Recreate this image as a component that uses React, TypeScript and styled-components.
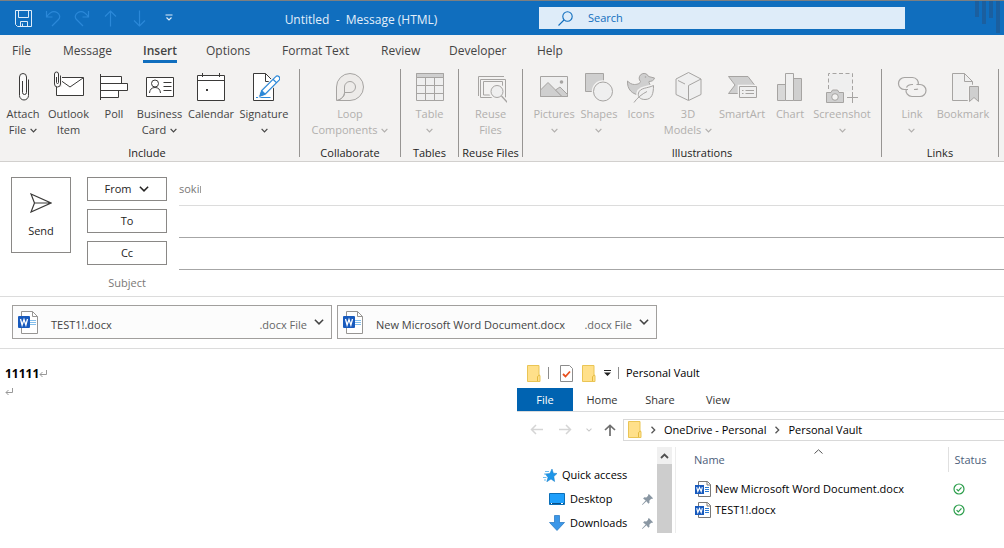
import React from 'react';
import styled, { createGlobalStyle } from 'styled-components';

const GlobalStyle = createGlobalStyle`
  *, *::before, *::after { box-sizing: border-box; }
  body { margin: 0; background: #fff; }
  body, button, input, table { font-family: "Open Sans", "Noto Sans", sans-serif; font-size: 11px; line-height: 16px; color: #444; }
  button { padding: 0; border: 0; background: none; }
  svg { display: block; flex: none; }
`;

/* ---------- title bar ---------- */

const TitleBar = styled.header`
  display: flex;
  height: 35px;
  background: #106ebe;
  border-top: 1px solid #7d7f80;
  color: #e3effa;
`;
const QuickAccess = styled.div`
  display: flex;
  align-items: center;
  padding-left: 9px;
  width: 183px;
`;
const QuickButton = styled.button<{ $dim?: boolean }>`
  display: flex;
  justify-content: center;
  width: 29px;
  color: ${p => (p.$dim ? '#2b88d8' : '#deecf9')};
`;
const WindowTitle = styled.h1`
  flex: 356 1 0;
  margin: 0;
  padding-top: 3px;
  align-self: center;
  text-align: center;
  font-size: 12px;
  line-height: 16px;
  font-weight: 400;
  white-space: pre;
`;
const SearchBox = styled.label`
  flex: 347 1 0;
  display: flex;
  align-items: center;
  gap: 15px;
  height: 22px;
  margin-top: 6px;
  padding-left: 19px;
  background: #deecf9;
  color: #106ebe;
`;
const SearchInput = styled.input`
  flex: 1;
  min-width: 0;
  padding: 0;
  border: 0;
  outline: 0;
  background: transparent;
  color: #106ebe;
  &::placeholder { color: #106ebe; opacity: 1; }
`;
const Ornament = styled.div`
  display: flex;
  justify-content: flex-end;
  width: 99px;
  padding-right: 3px;
`;

/* ---------- ribbon ---------- */

const Tabs = styled.nav`
  display: grid;
  grid-template-columns: 51px 80px 63px 76px 99px 68px 88px auto;
  justify-content: start;
  padding: 7px 0 0 12px;
  height: 31px;
  background: #f3f2f1;
`;
const Tab = styled.button<{ $active?: boolean }>`
  justify-self: start;
  height: 21px;
  font-size: 12px;
  line-height: 16px;
  font-weight: ${p => (p.$active ? 600 : 400)};
  border-bottom: 3px solid ${p => (p.$active ? '#106ebe' : 'transparent')};
  white-space: nowrap;
`;
const RibbonBar = styled.div`
  display: flex;
  height: 96px;
  padding-top: 3px;
  background: #f3f2f1;
  border-bottom: 1px solid #d2d0ce;
`;
const Group = styled.section<{ $width: number; $gap?: number }>`
  flex: none;
  width: ${p => p.$width}px;
  height: 88px;
  padding-right: ${p => p.$gap ?? 0}px;
  border-right: 1px solid #979593;
`;
const GroupItems = styled.div<{ $start?: boolean }>`
  display: flex;
  justify-content: ${p => (p.$start ? 'flex-start' : 'center')};
  height: 76px;
`;
const GroupName = styled.h2`
  margin: 0;
  font-size: 11px;
  line-height: 16px;
  font-weight: 400;
  color: #252423;
  text-align: center;
  white-space: nowrap;
`;
const Tool = styled.button<{ $width: number; $dim?: boolean }>`
  display: flex;
  flex-direction: column;
  align-items: center;
  width: ${p => p.$width}px;
  padding-top: 2px;
  gap: 3px;
  color: ${p => (p.$dim ? '#b1afad' : '#444')};
`;
const ToolLine = styled.span`
  display: flex;
  justify-content: center;
  align-items: center;
  gap: 4px;
  height: 16px;
  white-space: nowrap;
`;

/* ---------- message header ---------- */

const Envelope = styled.section`
  display: flex;
  padding: 12px 0 0 11px;
  border-bottom: 1px solid #dcdcdc;
`;
const SendButton = styled.button`
  display: flex;
  flex-direction: column;
  align-items: center;
  justify-content: center;
  gap: 10px;
  width: 60px;
  height: 76px;
  margin: 3px 16px 0 0;
  padding-top: 2px;
  border: 1px solid #8a8886;
  color: #252423;
`;
const Rows = styled.div`
  flex: 1;
`;
const Row = styled.div`
  display: flex;
  height: 32px;
`;
const SubjectRow = styled.div`
  display: flex;
  align-items: center;
  height: 26px;
`;
const RecipientButton = styled.button`
  display: flex;
  align-items: center;
  justify-content: center;
  gap: 8px;
  width: 80px;
  height: 24px;
  margin: 3px 12px 0 0;
  border: 1px solid #8a8886;
  color: #252423;
`;
const Sender = styled.div`
  display: flex;
  flex: 1;
  padding-top: 7px;
  border-bottom: 1px solid #dcdcdc;
  color: #7a7876;
`;
const Clipped = styled.span`
  width: 1px;
  height: 7px;
  margin: 5px 0 0 1px;
  background: #a09e9c;
`;
const RecipientInput = styled.input`
  flex: 1;
  min-width: 0;
  padding: 0;
  border: 0;
  border-bottom: 1px solid #a6a6a6;
  outline: 0;
  border-radius: 0;
`;
const SubjectLabel = styled.label`
  width: 80px;
  margin-right: 12px;
  text-align: center;
  color: #7a7876;
`;
const SubjectInput = styled.input`
  flex: 1;
  min-width: 0;
  border: 0;
  padding: 0;
  outline: 0;
`;

const Attachments = styled.section`
  display: flex;
  gap: 5px;
  padding: 8px 12px 9px;
  border-bottom: 1px solid #dcdcdc;
`;
const Attachment = styled.button`
  display: flex;
  align-items: center;
  width: 320px;
  height: 34px;
  padding: 0 7px 0 5px;
  border: 1px solid #a19f9d;
  background: #fcfcfc;
`;
const AttachmentName = styled.span`
  flex: 1;
  min-width: 0;
  padding: 5px 0 0 13px;
  text-align: left;
  white-space: nowrap;
`;
const AttachmentType = styled.span`
  padding: 5px 7px 0 0;
  color: #666;
  white-space: nowrap;
`;

/* ---------- body and file window ---------- */

const Workspace = styled.main`
  display: grid;
  grid-template-columns: 517px minmax(0, 1fr);
  padding-top: 12px;
`;
const MessageBody = styled.div`
  padding: 4px 5px;
`;
const Paragraph = styled.p`
  display: flex;
  align-items: center;
  margin: 0;
  height: 18px;
  font-size: 12px;
  font-weight: 700;
  color: #000;
`;
const Explorer = styled.section`
  color: #000;
`;
const ExplorerTitle = styled.div`
  display: flex;
  align-items: center;
  height: 27px;
  padding: 0 0 3px 10px;
`;
const Divider = styled.span`
  width: 1px;
  height: 12px;
  margin: 0 7px;
  background: #8c8c8c;
`;
const TitleIcons = styled.span`
  display: flex;
  align-items: center;
  gap: 8px;
`;
const ExplorerTabs = styled.nav`
  display: flex;
  height: 24px;
  border-bottom: 1px solid #dadbdc;
`;
const ExplorerTab = styled.button<{ $file?: boolean }>`
  width: ${p => (p.$file ? 56 : 58)}px;
  height: 23px;
  color: ${p => (p.$file ? '#fff' : '#333')};
  background: ${p => (p.$file ? '#0063b1' : 'transparent')};
`;
const AddressRow = styled.div`
  display: flex;
  align-items: center;
  height: 35px;
  padding-left: 13px;
`;
const NavButtons = styled.div`
  display: flex;
  align-items: center;
  width: 93px;
`;
const NavButton = styled.button<{ $width: number }>`
  width: ${p => p.$width}px;
`;
const Address = styled.div`
  display: flex;
  align-items: center;
  gap: 8px;
  flex: 1;
  height: 22px;
  padding-left: 4px;
  border: 1px solid #d9d9d9;
  border-right: 0;
  white-space: nowrap;
`;
const Crumb = styled.a`
  color: #000;
  text-decoration: none;
`;
const Panes = styled.div`
  display: flex;
  height: 86px;
`;
const Tree = styled.ul`
  width: 140px;
  margin: 0;
  padding: 16px 0 0;
  list-style: none;
`;
const TreeItem = styled.li<{ $indent?: boolean }>`
  display: flex;
  align-items: center;
  gap: 5px;
  height: 24px;
  padding: 0 4px 0 ${p => (p.$indent ? 32 : 26)}px;
`;
const TreeLabel = styled.a`
  flex: 1;
  color: #000;
  text-decoration: none;
  white-space: nowrap;
`;
const Scrollbar = styled.div`
  width: 15px;
  margin-right: 3px;
  background: #cdcdcd;
`;
const ScrollUp = styled.button`
  display: flex;
  align-items: center;
  justify-content: center;
  width: 15px;
  height: 17px;
  background: #f0f0f0;
`;
const FilePane = styled.div`
  flex: 1;
  border-left: 1px solid #ededed;
`;
const FileTable = styled.table`
  width: 100%;
  table-layout: fixed;
  border-collapse: collapse;
  text-align: left;
  color: #000;
`;
const HeadCell = styled.th<{ $first?: boolean }>`
  width: ${p => (p.$first ? '272px' : 'auto')};
  height: 25px;
  padding: 0 0 0 ${p => (p.$first ? 18 : 6)}px;
  border-right: ${p => (p.$first ? '1px solid #e0e0e0' : '0')};
  font-weight: 400;
  color: #4c607a;
`;
const HeadContent = styled.span`
  display: grid;
  grid-template-columns: 116px auto;
  justify-content: start;
`;
const FileRow = styled.tr`
  height: 21px;
`;
const Cell = styled.td<{ $first?: boolean }>`
  padding: 0 0 0 ${p => (p.$first ? 19 : 5)}px;
`;
const FileName = styled.span`
  display: flex;
  align-items: center;
  gap: 4px;
  white-space: nowrap;
`;
const SpacerRow = styled.tr`
  height: 6px;
`;

/* ---------- icons ---------- */

const Chevron = ({ w = 7, sw = 1.4, color = 'currentColor' }: { w?: number; sw?: number; color?: string }) => (
  <svg width={w} height={w} viewBox="0 0 8 8" fill="none" stroke={color} strokeWidth={sw}>
    <path d="M.7 2.2 4 5.5l3.3-3.3" />
  </svg>
);
const ChevronRight = () => (
  <svg width="6" height="8" viewBox="0 0 6 8" fill="none" stroke="#555" strokeWidth="1.3"><path d="m1.5.8 3.2 3.2-3.2 3.2" /></svg>
);

const Glyph = ({ children, dim }: { children: React.ReactNode; dim?: boolean }) => (
  <svg width="32" height="32" viewBox="0 0 32 32" fill="none" stroke={dim ? '#a6a4a2' : '#3b3a39'} strokeWidth="1">
    {children}
  </svg>
);

const glyphs: Record<string, React.ReactNode> = {
  clip: <path fill="#fafafa" d="M21.500 8.500v16a4.500 4.500 0 0 1-9 0V6a3.500 3.500 0 0 1 7 0v15.500a2 2 0 0 1-4 0V10" />,
  item: (
    <>
      <path d="M3.500 6.500h27v18h-27z" fill="#fff" />
      <path d="M5 7.500 17 16 30 7" />
      <path d="M0 0h9v16H0z" fill="#f3f2f1" stroke="none" />
      <path fill="#fafafa" d="M7.500 4.500v8.500a2.800 2.800 0 0 1-6 0V3a2 2 0 0 1 4 0v8.500a1 1 0 0 1-2 0V6" />
    </>
  ),
  poll: (
    <>
      <path d="M2.500 5.500h21v7h-21zM2.500 12.500h27v7h-27zM2.500 19.500h18v7h-18z" fill="#fff" />
      <path d="M2.500 3v26" />
    </>
  ),
  card: (
    <>
      <path d="M2.500 6.500h27v19h-27z" fill="#fff" />
      <circle cx="11" cy="12.500" r="3.500" />
      <path d="M5.500 22c.3-3.600 2.200-5.500 5.500-5.500s5.200 1.900 5.500 5.500M19.500 11.500h8M19.500 15.500h8M19.500 19.500h8" />
    </>
  ),
  calendar: (
    <>
      <path d="M2.500 4.500h27v25h-27z" fill="#fff" />
      <path d="M2.500 9.500h27M7.500 2v4M24.500 2v4" />
      <path d="M11 18h2v2h-2z" fill="#3b3a39" stroke="none" />
    </>
  ),
  sign: (
    <>
      <path d="M5.500 2.500h12l8 8v19h-20z" fill="#fff" />
      <path d="M17.500 2.500v8h8" />
      <path d="M8 26.500h14.500" stroke="#2b88d8" />
      <path d="m12 25 1.800-5.500L27.500 5.800a2.400 2.400 0 0 1 3.600 3.400L17.300 23z" fill="#fff" stroke="#f3f2f1" strokeWidth="3" />
      <path d="m12 25 1.800-5.500L27.500 5.800a2.400 2.400 0 0 1 3.600 3.400L17.300 23zM25 8.300l3.500 3.400" fill="#fff" stroke="#2b88d8" strokeWidth="1.200" />
      <path d="m12 25 1.800-5.500 3.500 3.500z" fill="#2b88d8" stroke="#2b88d8" />
    </>
  ),
  loop: (
    <>
      <path d="M2.500 29.500V16A13.500 13.500 0 1 1 16 29.500z" fill="#edebe9" />
      <path d="M10.500 21.500V16a5.500 5.500 0 1 1 5.500 5.500zc0 3.500-2.500 6.500-7.500 8" fill="#edebe9" />
      <path d="M10.500 21.500c0 3.500-2.500 6.500-7.500 8" />
    </>
  ),
  table: (
    <>
      <path d="M2.500 2.500h27v27h-27z" fill="#efefef" />
      <path d="M2.500 2.500h27v4h-27z" fill="#cfcfcf" />
      <path d="M11.500 6.500v23M20.500 6.500v23M2.500 14.500h27M2.500 22.500h27" />
    </>
  ),
  reuse: (
    <>
      <path d="M3.500 25V5.500H29M5.500 26.500v-18h25v18zM8.500 24V10.500h19V24z" />
      <circle cx="22" cy="20.500" r="6" fill="#efefef" stroke="#f3f2f1" strokeWidth="4" />
      <path d="m26.500 25 6 6.500" stroke="#f3f2f1" strokeWidth="4" />
      <circle cx="22" cy="20.500" r="6" fill="#efefef" />
      <path d="m26.500 25 6 6.500" strokeWidth="1.400" />
    </>
  ),
  pictures: (
    <>
      <path d="M2.500 5.500h27v20h-27z" fill="#efefef" />
      <path d="m2.500 19 7.500-7.500 14 14h-21.500z" fill="#cfcfcf" />
      <path d="m17.500 19 4.500-3 7.500 7.500v2h-5.500z" fill="#cfcfcf" />
      <circle cx="23.500" cy="11" r="1.800" fill="#a6a4a2" stroke="none" />
    </>
  ),
  shapes: (
    <>
      <path d="M2.500 2.500h18v18h-18z" fill="#cfcfcf" />
      <circle cx="20" cy="20.500" r="9.500" fill="#efefef" stroke="#f3f2f1" strokeWidth="3.500" />
      <circle cx="20" cy="20.500" r="9.500" fill="#efefef" />
    </>
  ),
  duck: (
    <>
      <path d="M14.500 9A4.700 4.700 0 0 1 23.500 5.500l6 1.500c-.5 2.500-3 3.500-5.500 3.500-.5 2 2 3 2 6 0 5-4 7.500-10 7.500C7 24 2 18 2.500 10c2 2 4 3.500 7 3.500 3.500 0 6-1.500 6-3z" fill="#cfcfcf" />
      <circle cx="20.500" cy="6" r=".8" fill="#a6a4a2" stroke="none" />
      <path d="M28.500 14.500c0 8-1.500 14-8.500 14-5 0-7.500-3-6.500-6.500 1.500-5.500 9-4.500 15-7.500zM9 31.500C12 27 17 23 22 20.500" stroke="#f3f2f1" strokeWidth="4" />
      <path d="M28.500 14.500c0 8-1.500 14-8.500 14-5 0-7.500-3-6.500-6.500 1.500-5.500 9-4.500 15-7.500z" fill="#efefef" />
      <path d="M9 31.500C12 27 17 23 22 20.500" />
    </>
  ),
  cube: (
    <path d="M16.500 1.500 29 8v15.500l-12.500 6L4 23.500V8zM16.500 14.500V29M16.500 14.500 29 8M6 9.500l7 3.500" fill="#efefef" />
  ),
  smartart: (
    <>
      <path d="M2.500 5.500H22l6.500 8.500-6.500 8.500H2.500L9 14z" fill="#cfcfcf" />
      <path d="M13.500 15.500h17v11h-17z" stroke="#f3f2f1" strokeWidth="3.500" />
      <path d="M13.500 15.500h17v11h-17z" fill="#efefef" />
      <path d="M16 19.500h1.500M19.500 19.500H28M16 22.500h1.500M19.500 22.500H28" />
    </>
  ),
  chart: (
    <>
      <path d="M3.500 13.500h8v16h-8z" fill="#d8d8d8" />
      <path d="M19.500 7.500h8v22h-8z" fill="#cfcfcf" />
      <path d="M11.500 2.500h8v27h-8z" fill="#efefef" />
    </>
  ),
  screenshot: (
    <>
      <path d="M2.500 2.500h24v24h-24z" fill="#efefef" stroke="none" />
      <path d="M2.500 18V2.500h24V20" strokeDasharray="4 2.500" />
      <path d="M.5 21.500h4.500l1.500-2.500h5l1.500 2.500h4.500v10H.500z" fill="#cfcfcf" stroke="#f3f2f1" strokeWidth="3" />
      <path d="M.5 21.500h4.500l1.500-2.500h5l1.500 2.500h4.500v10H.500z" fill="#cfcfcf" />
      <circle cx="9" cy="26" r="3.300" fill="#f3f2f1" />
      <path d="M20 20.500h12v12H20z" fill="#f3f2f1" stroke="none" />
      <path d="M26.500 21v11M21 26.500h11" />
    </>
  ),
  link: (
    <path strokeWidth="1.200" d="M12 18.500H8.500a6 6 0 0 1 0-12h8a6 6 0 0 1 5.800 7.500M22 18c-1 .5-2 .5-4 .5M20.500 13.500H24a6 6 0 0 1 0 12h-8a6 6 0 0 1-5.800-7.500M10.500 16.500c1-2 3-3 5.500-3h1" />
  ),
  bookmark: (
    <>
      <path d="M5.500 2.500h12l8 8v19h-20z" fill="#efefef" />
      <path d="M17.500 2.500v8h8" />
      <path d="M22.500 15.500h9v15l-4.500-4-4.500 4z" fill="#cfcfcf" stroke="#f3f2f1" strokeWidth="3.500" />
      <path d="M22.500 15.500h9v15l-4.500-4-4.500 4z" fill="#cfcfcf" />
    </>
  ),
};

const WordIcon = ({ large }: { large?: boolean }) => (
  <svg width={large ? 20 : 16} height={large ? 23 : 16} viewBox={large ? '0 0 20 23' : '0 0 16 16'}>
    {large ? (
      <>
        <path d="M3.500.5h11l5 5v17h-16z" fill="#fff" stroke="#979593" />
        <path d="M14.500.5v5h5" fill="none" stroke="#979593" />
        <path d="M12 9.500h6M12 11.500h6M12 13.500h6" stroke="#83beec" />
        <rect y="5" width="12" height="12" rx="1" fill="#185abd" />
        <path d="m2.500 8 1.600 6L6 8.500 7.900 14l1.600-6" fill="none" stroke="#fff" strokeWidth="1.300" />
      </>
    ) : (
      <>
        <path d="M3.500.5h9l3 3v12h-12z" fill="#fff" stroke="#7a7876" />
        <path d="M12 .5v3.500h3.500" fill="none" stroke="#7a7876" />
        <path d="M10 6.500h4M10 8.500h4M10 10.500h4" stroke="#2b7cd3" />
        <rect y="4" width="9" height="9" fill="#185abd" />
        <path d="m1.700 6.200 1.100 4.300 1.700-4 1.700 4 1.100-4.300" fill="none" stroke="#fff" strokeWidth="1.100" />
      </>
    )}
  </svg>
);

const Folder = () => (
  <svg width="14" height="17" viewBox="0 0 14 17">
    <path d="M.5.5h11.500v10h1v6H.5z" fill="#ffe08a" stroke="#eac555" />
    <path d="M10.500 16V11.500l2-1.500" fill="none" stroke="#e3b93e" />
  </svg>
);

const Pin = () => (
  <svg width="11" height="11" viewBox="0 0 12 12" fill="#8a97a3">
    <path d="m7.500 0 4.500 4.500-1 1-1-.2-2 2 .2 2.200-1.200 1.200L4.800 8 .5 12 0 11.500l4-4.300L1.200 4.800l1.300-1.200 2.200.2 2-2L6.500 1z" />
  </svg>
);

const Synced = () => (
  <svg width="12" height="12" viewBox="0 0 12 12" fill="none" stroke="#2a9d4a" strokeWidth="1.200" role="img" aria-label="Available">
    <circle cx="6" cy="6" r="5" /><path d="m3.600 6.100 1.700 1.700 3.200-3.400" />
  </svg>
);

const Return = () => (
  <svg width="9" height="8" viewBox="0 0 9 8" fill="none" stroke="#999"><path d="M7.500 0v4.500H1M3.500 2 1 4.500 3.500 7" /></svg>
);

/* ---------- data ---------- */

type ToolDef = { icon: string; width: number; lines: string[]; menu?: boolean };
type GroupDef = { name: string; width: number; gap?: number; dim?: boolean; tools: ToolDef[] };

const groups: GroupDef[] = [
  {
    name: 'Include', width: 300, gap: 5, tools: [
      { icon: 'clip', width: 46, lines: ['Attach', 'File'], menu: true },
      { icon: 'item', width: 45, lines: ['Outlook', 'Item'] },
      { icon: 'poll', width: 46, lines: ['Poll'] },
      { icon: 'card', width: 45, lines: ['Business', 'Card'], menu: true },
      { icon: 'calendar', width: 58, lines: ['Calendar'] },
      { icon: 'sign', width: 48, lines: ['Signature', ''], menu: true },
    ],
  },
  { name: 'Collaborate', width: 101, dim: true, tools: [{ icon: 'loop', width: 90, lines: ['Loop', 'Components'], menu: true }] },
  { name: 'Tables', width: 58, dim: true, tools: [{ icon: 'table', width: 50, lines: ['Table', ''], menu: true }] },
  { name: 'Reuse Files', width: 64, dim: true, tools: [{ icon: 'reuse', width: 50, lines: ['Reuse', 'Files'] }] },
  {
    name: 'Illustrations', width: 359, dim: true, tools: [
      { icon: 'pictures', width: 46, lines: ['Pictures', ''], menu: true },
      { icon: 'shapes', width: 44, lines: ['Shapes', ''], menu: true },
      { icon: 'duck', width: 40, lines: ['Icons'] },
      { icon: 'cube', width: 54, lines: ['3D', 'Models'], menu: true },
      { icon: 'smartart', width: 54, lines: ['SmartArt'] },
      { icon: 'chart', width: 42, lines: ['Chart'] },
      { icon: 'screenshot', width: 62, lines: ['Screenshot', ''], menu: true },
    ],
  },
  {
    name: 'Links', width: 117, dim: true, tools: [
      { icon: 'link', width: 46, lines: ['Link', ''], menu: true },
      { icon: 'bookmark', width: 56, lines: ['Bookmark'] },
    ],
  },
];

const tabs = ['File', 'Message', 'Insert', 'Options', 'Format Text', 'Review', 'Developer', 'Help'];
const files = ['New Microsoft Word Document.docx', 'TEST1!.docx'];

export default function App() {
  return (
    <>
      <GlobalStyle />
      <TitleBar>
        <QuickAccess>
          <QuickButton aria-label="Save">
            <svg width="17" height="17" viewBox="0 0 17 17" fill="none" stroke="currentColor"><path d="M.5.500h16v16h-14l-2-2zM3.500.500v7h10v-7M5.500 16.500v-5h7v5M7.500 13.500v3" /></svg>
          </QuickButton>
          <QuickButton $dim aria-label="Undo">
            <svg width="16" height="17" viewBox="0 0 16 17" fill="none" stroke="currentColor" strokeWidth="1.200"><path d="M1.500 1v6h6M1.500 7C5 2 9 .8 12 2.500s3.500 5 1.500 7L7 16" /></svg>
          </QuickButton>
          <QuickButton $dim aria-label="Redo">
            <svg width="16" height="17" viewBox="0 0 16 17" fill="none" stroke="currentColor" strokeWidth="1.200"><path d="M14.500 1v6h-6M14.500 7C11 2 7 .8 4 2.500s-3.500 5-1.500 7L9 16" /></svg>
          </QuickButton>
          <QuickButton $dim aria-label="Previous">
            <svg width="13" height="17" viewBox="0 0 13 17" fill="none" stroke="currentColor" strokeWidth="1.200"><path d="M6.500 1v15.500M1 6.500 6.500 1 12 6.500" /></svg>
          </QuickButton>
          <QuickButton $dim aria-label="Next">
            <svg width="13" height="17" viewBox="0 0 13 17" fill="none" stroke="currentColor" strokeWidth="1.200"><path d="M6.500.500V16M1 10.500 6.500 16l5.500-5.500" /></svg>
          </QuickButton>
          <QuickButton aria-label="Customize toolbar">
            <svg width="8" height="8" viewBox="0 0 8 8" fill="none" stroke="currentColor" strokeWidth="1.200"><path d="M.5 1h7M1.500 3.500 4 6l2.500-2.500" /></svg>
          </QuickButton>
        </QuickAccess>
        <WindowTitle>{'Untitled  -  Message (HTML)'}</WindowTitle>
        <SearchBox>
          <svg width="15" height="15" viewBox="0 0 15 15" fill="none" stroke="currentColor" strokeWidth="1.100"><circle cx="9.500" cy="5.500" r="4.700" /><path d="M6 9 .5 14.500" /></svg>
          <SearchInput placeholder="Search" aria-label="Search" />
        </SearchBox>
        <Ornament>
          <svg width="26" height="34" viewBox="0 0 26 34" fill="#1b5f9f"><path d="M0 0h4v16H0zM7 0h4v23H7zM14 0h4v17h-4zM21 0h4v32h-4z" /></svg>
        </Ornament>
      </TitleBar>

      <Tabs>
        {tabs.map(t => <Tab key={t} $active={t === 'Insert'}>{t}</Tab>)}
      </Tabs>
      <RibbonBar>
        {groups.map(g => (
          <Group key={g.name} $width={g.width} $gap={g.gap}>
            <GroupItems $start={g.name === 'Include'}>
              {g.tools.map(t => (
                <Tool key={t.icon} $width={t.width} $dim={g.dim}>
                  <Glyph dim={g.dim}>{glyphs[t.icon]}</Glyph>
                  <span>
                    {t.lines.map((line, i) => (
                      <ToolLine key={i}>
                        {line}
                        {t.menu && i === t.lines.length - 1 && <Chevron />}
                      </ToolLine>
                    ))}
                  </span>
                </Tool>
              ))}
            </GroupItems>
            <GroupName>{g.name}</GroupName>
          </Group>
        ))}
      </RibbonBar>

      <Envelope>
        <SendButton>
          <svg width="22" height="20" viewBox="0 0 22 20" fill="none" stroke="#3b3a39" strokeWidth="1.200"><path d="M1 1 21 10 1 19l3.500-9zM4.500 10H21" /></svg>
          Send
        </SendButton>
        <Rows>
          <Row>
            <RecipientButton>From <Chevron w={10} sw={1.2} /></RecipientButton>
            <Sender>soki<Clipped /></Sender>
          </Row>
          <Row>
            <RecipientButton>To</RecipientButton>
            <RecipientInput aria-label="To" />
          </Row>
          <Row>
            <RecipientButton>Cc</RecipientButton>
            <RecipientInput aria-label="Cc" />
          </Row>
          <SubjectRow>
            <SubjectLabel htmlFor="subject">Subject</SubjectLabel>
            <SubjectInput id="subject" />
          </SubjectRow>
        </Rows>
      </Envelope>

      <Attachments>
        {[...files].reverse().map(f => (
          <Attachment key={f}>
            <WordIcon large />
            <AttachmentName>{f}</AttachmentName>
            <AttachmentType>.docx File</AttachmentType>
            <Chevron w={10} sw={1.2} />
          </Attachment>
        ))}
      </Attachments>

      <Workspace>
        <MessageBody>
          <Paragraph>11111<Return /></Paragraph>
          <Paragraph><Return /></Paragraph>
        </MessageBody>

        <Explorer>
          <ExplorerTitle>
            <Folder />
            <Divider />
            <TitleIcons>
              <svg width="18" height="17" viewBox="-4 0 18 17"><path d="M.5.500h9l3 3v13H.500z" fill="#fff" stroke="#8c8c8c" /><path d="m3 9 2.500 2.500L10 6.500" fill="none" stroke="#e8501e" strokeWidth="1.800" /></svg>
              <Folder />
              <svg width="7" height="6" viewBox="0 0 7 6"><path d="M0 0h7v1H0zM0 2.500h7L3.500 6z" fill="#222" /></svg>
            </TitleIcons>
            <Divider />
            Personal Vault
          </ExplorerTitle>
          <ExplorerTabs>
            <ExplorerTab $file>File</ExplorerTab>
            <ExplorerTab>Home</ExplorerTab>
            <ExplorerTab>Share</ExplorerTab>
            <ExplorerTab>View</ExplorerTab>
          </ExplorerTabs>
          <AddressRow>
            <NavButtons>
              <NavButton $width={29} aria-label="Back">
                <svg width="13" height="11" viewBox="0 0 13 11" fill="none" stroke="#d5d5d5" strokeWidth="1.500"><path d="M13 5.500H1.500M6 1 1.500 5.500 6 10" /></svg>
              </NavButton>
              <NavButton $width={27} aria-label="Forward">
                <svg width="13" height="11" viewBox="0 0 13 11" fill="none" stroke="#d5d5d5" strokeWidth="1.500"><path d="M0 5.500h11.500M7 1l4.500 4.500L7 10" /></svg>
              </NavButton>
              <NavButton $width={18} aria-label="Recent locations"><Chevron w={6} color="#c8c8c8" /></NavButton>
              <NavButton $width={16} aria-label="Up">
                <svg width="12" height="12" viewBox="0 0 12 12" fill="none" stroke="#6e6e6e" strokeWidth="1.700"><path d="M6 12V1.500M1 6l5-4.700L11 6" /></svg>
              </NavButton>
            </NavButtons>
            <Address>
              <Folder />
              <ChevronRight />
              <Crumb href="#onedrive">OneDrive - Personal</Crumb>
              <ChevronRight />
              <Crumb href="#vault">Personal Vault</Crumb>
            </Address>
          </AddressRow>
          <Panes>
            <Tree>
              <TreeItem>
                <svg width="14" height="13" viewBox="0 0 14 13"><path d="m9 0 1.300 4.200L14 4.500l-3.200 3 .8 5L8 10l-4.200 2.800L5 8.500 2.500 5l4.300-.5z" fill="#1e96e8" stroke="#0f7ac8" strokeWidth=".5" /><path d="M2 2.500h4M1 5h2.500M0 8.500h3.500M1 11h2" stroke="#6bbcf0" /></svg>
                <TreeLabel href="#quick">Quick access</TreeLabel>
              </TreeItem>
              <TreeItem $indent>
                <svg width="16" height="12" viewBox="0 0 16 12"><path d="M.5.500h15v11H.500z" fill="#1e9ffb" stroke="#0b6fb8" /><path d="M1 10.500h14" stroke="#0a4f86" /><path d="M2 10.500h1M12 10.500h2" stroke="#fff" /></svg>
                <TreeLabel href="#desktop">Desktop</TreeLabel>
                <Pin />
              </TreeItem>
              <TreeItem $indent>
                <svg width="16" height="16" viewBox="0 0 16 16"><path d="M5.500.500h5v7h5L8 15.500.500 7.500h5z" fill="#3b97e8" stroke="#1f74c0" strokeWidth=".7" /></svg>
                <TreeLabel href="#downloads">Downloads</TreeLabel>
                <Pin />
              </TreeItem>
            </Tree>
            <Scrollbar>
              <ScrollUp aria-label="Scroll up">
                <svg width="9" height="6" viewBox="0 0 9 6" fill="none" stroke="#505050" strokeWidth="1.800"><path d="m1 5 3.500-3.500L8 5" /></svg>
              </ScrollUp>
            </Scrollbar>
            <FilePane>
              <FileTable>
                <thead>
                  <tr>
                    <HeadCell $first>
                      <HeadContent>
                        Name
                        <svg width="16" height="5" viewBox="-4 3 16 5" overflow="visible" fill="none" stroke="#555"><path d="M.5 4.500 4.500.800l4 3.700" /></svg>
                      </HeadContent>
                    </HeadCell>
                    <HeadCell>Status</HeadCell>
                  </tr>
                </thead>
                <tbody>
                  <SpacerRow><Cell colSpan={2} /></SpacerRow>
                  {files.map(f => (
                    <FileRow key={f}>
                      <Cell $first><FileName><WordIcon />{f}</FileName></Cell>
                      <Cell><Synced /></Cell>
                    </FileRow>
                  ))}
                </tbody>
              </FileTable>
            </FilePane>
          </Panes>
        </Explorer>
      </Workspace>
    </>
  );
}
